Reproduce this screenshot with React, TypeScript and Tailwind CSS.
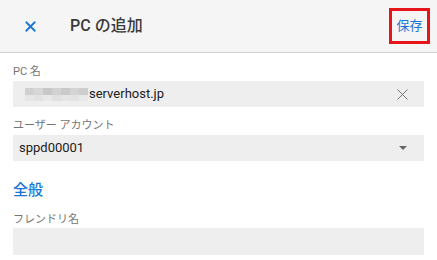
import { X } from "lucide-react";

const font = { fontFamily: "Roboto, 'Noto Sans CJK JP', sans-serif" };

function Blurred() {
  // モザイク処理されたホスト名の前半
  const top = ["#d0d0d0", "#d6d6d6", "#c8c8c8", "#d2d2d2", "#cacaca", "#d4d4d4", "#cdcdcd"];
  const bottom = ["#e6e6e6", "#e2e2e2", "#e8e8e8", "#e0e0e0", "#e5e5e5", "#e3e3e3", "#e9e9e9"];
  return (
    <div className="flex flex-col w-[63px] h-[13px]">
      <div className="flex h-[7px]">
        {top.map((c, i) => (
          <div key={i} className="flex-1" style={{ background: c }} />
        ))}
      </div>
      <div className="flex h-[6px]">
        {bottom.map((c, i) => (
          <div key={i} className="flex-1" style={{ background: c }} />
        ))}
      </div>
    </div>
  );
}

export default function App() {
  return (
    <div className="w-[437px] h-[260px] bg-white overflow-hidden" style={font}>
      {/* ヘッダー */}
      <div className="h-[53px] bg-[#f5f5f5] border-b border-[#cfcfcf] flex items-center">
        <X size={17} strokeWidth={2.5} className="text-[#1976d2] ml-[22px]" />
        <div className="ml-[31px] text-[16px] font-medium text-[#3a3a3a]">PC の追加</div>
        <div className="ml-auto mr-[7px] mb-[1px] w-[41px] h-[36px] border-[3px] border-[#e8141c] flex items-center justify-center">
          <span className="text-[13px] text-[#1976d2]">保存</span>
        </div>
      </div>

      <div className="px-[13px] pt-[11px] flex flex-col">
        <div className="text-[11px] leading-[16px] text-[#757575]">PC 名</div>
        <div className="mt-[1px] h-[26px] bg-[#eeeeee] flex items-center pl-[12px] pr-[12px]">
          <Blurred />
          <span className="ml-[1px] text-[13px] text-[#212121]">serverhost.jp</span>
          <X size={19} strokeWidth={1.2} className="ml-auto text-[#6f6f6f]" />
        </div>

        <div className="mt-[11px] text-[11px] leading-[16px] text-[#757575]">ユーザー アカウント</div>
        <div className="mt-[1px] h-[26px] bg-[#eeeeee] flex items-center pl-[6px] pr-[17px]">
          <span className="text-[13px] text-[#212121]">sppd00001</span>
          <svg width="8" height="4" viewBox="0 0 8 4" className="ml-auto">
            <path d="M0 0 L8 0 L4 4 Z" fill="#666666" />
          </svg>
        </div>

        <div className="mt-[19px] text-[15px] leading-[20px] font-medium text-[#1976d2]">全般</div>

        <div className="mt-[12px] text-[11px] leading-[16px] text-[#757575]">フレンドリ名</div>
        <div className="h-[27px] bg-[#eeeeee]" />
      </div>
    </div>
  );
}
